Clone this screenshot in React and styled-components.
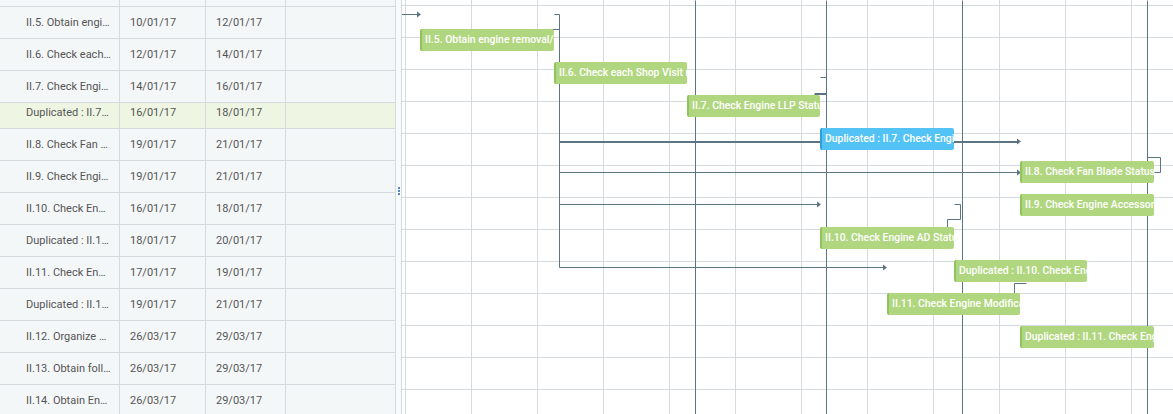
import React from 'react';
import styled, { createGlobalStyle } from 'styled-components';

const ORIGIN_X = 402;

const GlobalStyle = createGlobalStyle`
    html, body {
        margin: 0;
        padding: 0;
        background: #fff;
    }
    body {
        font-family: Roboto, "Liberation Sans", sans-serif;
        overflow: hidden;
    }
`
const Layout = styled.div`
    display: flex;
    width: 1173px;
    height: 414px;
    overflow: hidden;
`
const Grid = styled.div`
    width: 395px;
    flex-shrink: 0;
    background: #f4f7f8;
    border-right: 1px solid #d3dbdf;
    overflow: hidden;
`
const GridRow = styled.div`
    display: flex;
    box-sizing: border-box;
    height: ${p => p.$h}px;
    border-bottom: 1px solid #d3dbdf;
    background: ${p => p.$active ? '#eef5e3' : 'transparent'};
`
const Cell = styled.div`
    box-sizing: border-box;
    width: ${p => p.$w}px;
    flex-shrink: 0;
    padding-left: ${p => p.$pad || 0}px;
    padding-right: ${p => p.$padRight || 0}px;
    border-right: ${p => p.$last ? 'none' : '1px solid #d3dbdf'};
    color: #555;
    font-size: 11px;
    line-height: ${p => p.$lh}px;
    white-space: nowrap;
    overflow: hidden;
    text-overflow: ellipsis;
`
const Splitter = styled.div`
    width: 5px;
    flex-shrink: 0;
    background: #f8fafb;
    display: flex;
    flex-direction: column;
    align-items: center;
    gap: 1px;
    padding-top: 187px;
    box-sizing: border-box;
`
const Dot = styled.span`
    width: 2px;
    height: 2px;
    background: #4a86c8;
`
const Chart = styled.div`
    flex: 1;
    position: relative;
    border-left: 1px solid #d3dbdf;
    background: #fff;
    overflow: hidden;
`
const ChartRow = styled.div`
    display: flex;
    box-sizing: border-box;
    height: ${p => p.$h}px;
    border-bottom: 1px solid #d4dbdf;
`
const ChartCell = styled.div`
    box-sizing: border-box;
    width: ${p => p.$w}px;
    flex-shrink: 0;
    border-right: 1px solid #d4dbdf;
`
const Overlay = styled.div`
    position: absolute;
    inset: 0;
    pointer-events: none;
`
const Links = styled.svg`
    position: absolute;
    left: 0;
    top: 0;
`
const Bar = styled.div`
    position: absolute;
    box-sizing: border-box;
    height: 22px;
    padding-left: 3px;
    border-left: 2px solid ${p => p.$dup ? '#2f9fe0' : '#8fc35c'};
    border-radius: 2px;
    background: ${p => p.$dup ? '#53c3f6' : '#b1d680'};
    color: #fff;
    font-size: 10.4px;
    font-weight: 500;
    line-height: 22px;
    white-space: nowrap;
    overflow: hidden;
`

const tasks = [
    { name: 'II.5. Obtain engine removal/shop visit report', start: '10/01/17', end: '12/01/17' },
    { name: 'II.6. Check each Shop Visit report', start: '12/01/17', end: '14/01/17' },
    { name: 'II.7. Check Engine LLP Status', start: '14/01/17', end: '16/01/17' },
    { name: 'Duplicated : II.7. Check Engine LLP Status', start: '16/01/17', end: '18/01/17', active: true, short: true },
    { name: 'II.8. Check Fan Blade Status', start: '19/01/17', end: '21/01/17' },
    { name: 'II.9. Check Engine Accessories', start: '19/01/17', end: '21/01/17' },
    { name: 'II.10. Check Engine AD Status', start: '16/01/17', end: '18/01/17' },
    { name: 'Duplicated : II.10. Check Engine AD Status', start: '18/01/17', end: '20/01/17' },
    { name: 'II.11. Check Engine Modifications', start: '17/01/17', end: '19/01/17' },
    { name: 'Duplicated : II.11. Check Engine Modifications', start: '19/01/17', end: '21/01/17' },
    { name: 'II.12. Organize engine records', start: '26/03/17', end: '29/03/17' },
    { name: 'II.13. Obtain follow-up documents', start: '26/03/17', end: '29/03/17' },
    { name: 'II.14. Obtain Engine Certificates', start: '26/03/17', end: '29/03/17' },
];

// bars in page coordinates
const bars = [
    { label: 'II.5. Obtain engine removal/shop visit report', x: 420, y: 29, w: 134 },
    { label: 'II.6. Check each Shop Visit report', x: 554, y: 62, w: 133 },
    { label: 'II.7. Check Engine LLP Status', x: 687, y: 95, w: 133 },
    { label: 'Duplicated : II.7. Check Engine LLP Status', x: 820, y: 128, w: 134, dup: true },
    { label: 'II.8. Check Fan Blade Status', x: 1020, y: 161, w: 134 },
    { label: 'II.9. Check Engine Accessories', x: 1020, y: 194, w: 134 },
    { label: 'II.10. Check Engine AD Status', x: 820, y: 227, w: 134 },
    { label: 'Duplicated : II.10. Check Engine AD Status', x: 954, y: 260, w: 133 },
    { label: 'II.11. Check Engine Modifications', x: 887, y: 293, w: 133 },
    { label: 'Duplicated : II.11. Check Engine Modifications', x: 1020, y: 326, w: 134 },
];

const paths = [
    { pts: [[401, 14], [417, 14]] },
    { pts: [[554, 14], [559, 14], [559, 267], [883, 267]] },
    { pts: [[538, 29], [559, 29]] },
    { pts: [[559, 141], [1017, 141]], bold: true },
    { pts: [[559, 172], [1017, 172]] },
    { pts: [[559, 204], [817, 204]] },
    { pts: [[695, 0], [695, 414]] },
    { pts: [[826, 0], [826, 414]] },
    { pts: [[962, 0], [962, 414]] },
    { pts: [[1147, 0], [1147, 414]] },
    { pts: [[820, 77], [826, 77]] },
    { pts: [[814, 93], [826, 93]], bold: true },
    { pts: [[954, 204], [960, 204], [960, 219], [947, 219], [947, 227]] },
    { pts: [[1147, 157], [1160, 157], [1160, 172], [1154, 172]] },
    { pts: [[1026, 283], [1014, 283], [1014, 293]] },
];

const arrows = [[421, 14], [1021, 141], [1021, 172], [821, 204], [887, 267]];

const chartRows = [6, ...Array(13).fill(32)];
const chartCells = [4, ...Array(12).fill(66)];

const LinkLayer = () => (
    <Links width="771" height="414" viewBox={`${ORIGIN_X} 0 771 414`}>
        <g fill="none" stroke="#5b7584" strokeLinejoin="miter">
            {paths.map((p, i) => (
                <polyline
                    key={i}
                    points={p.pts.map(([x, y]) => p.bold ? `${x + 0.5},${y + 1}` : `${x + 0.5},${y + 0.5}`).join(' ')}
                    strokeWidth={p.bold ? 2 : 1}
                />
            ))}
        </g>
        <g fill="#5b7584">
            {arrows.map(([x, y], i) => (
                <polygon key={i} points={`${x - 4},${y - 2.5} ${x},${y + 0.5} ${x - 4},${y + 3.5}`} />
            ))}
        </g>
    </Links>
);

const App = () => {
    return (
        <Layout>
            <GlobalStyle />
            <Grid>
                <GridRow $h={7}>
                    <Cell $w={120} $lh={6} />
                    <Cell $w={86} $lh={6} />
                    <Cell $w={80} $lh={6} />
                    <Cell $w={109} $lh={6} $last />
                </GridRow>
                {tasks.map(t => (
                    <GridRow key={t.name} $h={t.short ? 26 : 32} $active={t.active}>
                        <Cell $w={120} $pad={26} $padRight={8} $lh={t.short ? 20 : 31}>{t.name}</Cell>
                        <Cell $w={86} $pad={10} $lh={t.short ? 20 : 31}>{t.start}</Cell>
                        <Cell $w={80} $pad={10} $lh={t.short ? 20 : 31}>{t.end}</Cell>
                        <Cell $w={109} $lh={31} $last />
                    </GridRow>
                ))}
            </Grid>
            <Splitter>
                <Dot />
                <Dot />
                <Dot />
            </Splitter>
            <Chart>
                {chartRows.map((h, r) => (
                    <ChartRow key={r} $h={h}>
                        {chartCells.map((w, c) => <ChartCell key={c} $w={w} />)}
                    </ChartRow>
                ))}
                <Overlay>
                    <LinkLayer />
                    {bars.map(b => (
                        <Bar
                            key={b.label}
                            $dup={b.dup}
                            style={{ left: b.x - ORIGIN_X, top: b.y, width: b.w }}
                        >
                            {b.label}
                        </Bar>
                    ))}
                </Overlay>
            </Chart>
        </Layout>
    );
}

export default App;
